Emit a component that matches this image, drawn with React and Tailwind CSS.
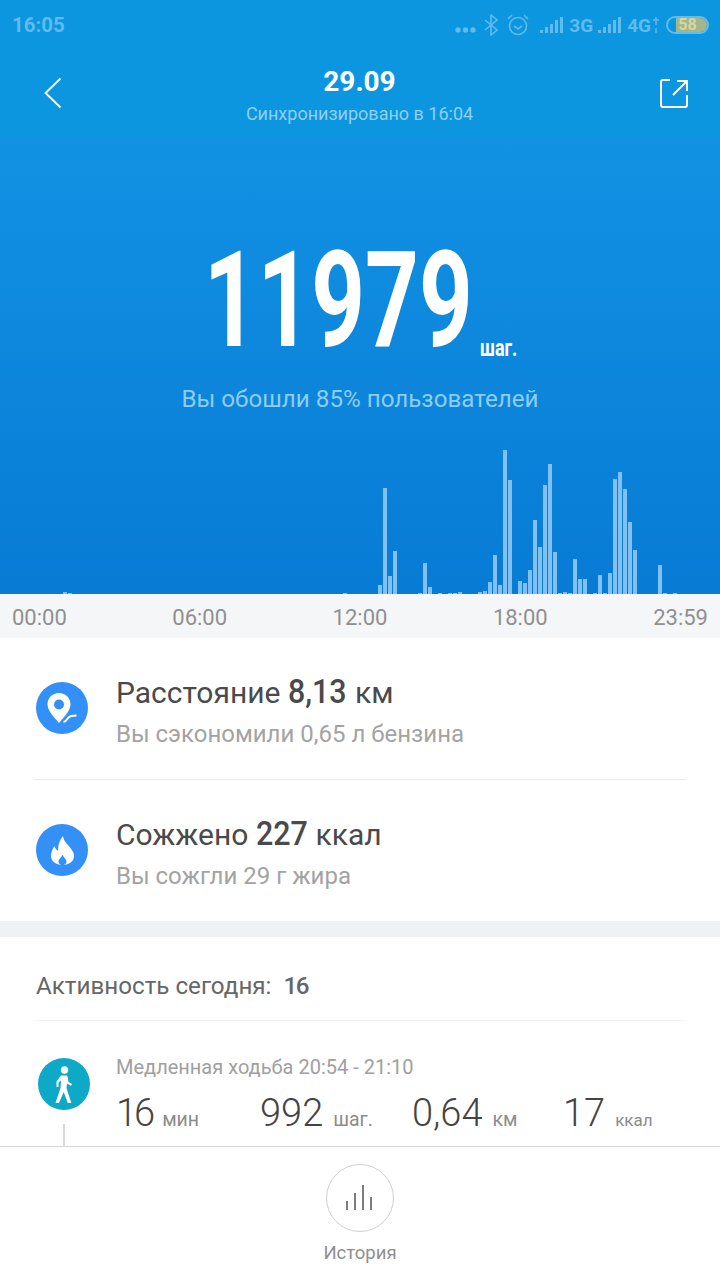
const BARS = { 12: 2, 13: 1, 68: 1, 75: 9, 76: 106, 77: 18, 78: 43, 83: 1, 84: 31, 85: 7, 87: 1, 89: 1, 90: 1, 91: 2, 95: 2, 96: 3, 97: 12, 98: 39, 99: 9, 100: 144, 101: 114, 103: 13, 104: 11, 105: 24, 106: 74, 107: 47, 108: 109, 109: 130, 110: 42, 111: 1, 112: 2, 113: 1, 114: 35, 115: 15, 116: 15, 118: 1, 119: 19, 120: 1, 121: 21, 122: 115, 123: 122, 124: 105, 125: 72, 126: 44, 131: 29, 132: 1, 134: 1 };
const SLOTS = Array.from({ length: 143 }, (_, i) => BARS[i] || 0);

function Signal() {
  return (
    <svg width="26" height="18" viewBox="0 0 26 18" fill="currentColor">
      <rect x="1" y="14" width="3" height="3" />
      <rect x="6" y="11" width="3" height="6" />
      <rect x="11" y="8" width="3" height="9" />
      <rect x="16" y="4" width="3" height="13" />
      <rect x="21" y="1" width="3" height="16" />
    </svg>
  );
}

function StatusBar() {
  return (
    <div className="flex h-[50px] items-center justify-between pl-[12px] pr-[11px] text-[#5fbcec]">
      <span className="text-[20.5px] font-bold leading-none">16:05</span>
      <div className="flex items-center">
        <svg className="mt-[9px]" width="21" height="8" viewBox="0 0 21 8" fill="currentColor">
          <circle cx="3" cy="4" r="2.700" />
          <circle cx="10.500" cy="4" r="2.700" />
          <circle cx="18" cy="4" r="2.700" />
        </svg>
        <svg className="ml-[8px]" width="14" height="22" viewBox="0 0 14 22" fill="none" stroke="currentColor" strokeWidth="1.6">
          <path d="M1 6l12 10-6 5V1l6 5L1 16" />
        </svg>
        <svg className="ml-[8px]" width="24" height="24" viewBox="0 0 24 24" fill="none" stroke="currentColor" strokeWidth="1.6">
          <circle cx="12" cy="13" r="8.500" />
          <path d="M8 13l4 3 4-3M2 6l4-4M22 6l-4-4" />
        </svg>
        <span className="ml-[9px]"><Signal /></span>
        <span className="ml-[4px] text-[19px] font-bold leading-none">3G</span>
        <span className="ml-[4px]"><Signal /></span>
        <span className="ml-[4px] text-[19px] font-bold leading-none">4G</span>
        <svg width="11" height="20" viewBox="0 0 11 20" fill="none" stroke="currentColor" strokeWidth="1.4">
          <path d="M5 2v8M2 5h6M5 13v5" />
        </svg>
        <div className="relative ml-[4px] flex h-[18px] w-[43px] items-center justify-center overflow-hidden rounded-full border-2 border-[#5fbcec]">
          <div className="absolute inset-y-0 left-[8px] right-0 bg-[#a3b58a]" />
          <span className="relative text-[16px] font-bold leading-none text-[#d7d6a0]">58</span>
        </div>
      </div>
    </div>
  );
}

function Header() {
  return (
    <div className="h-[138px] bg-[#0c96df]">
      <StatusBar />
      <div className="flex items-start justify-between pl-[43px] pr-[32px]">
        <svg className="mt-[27px]" width="20" height="32" viewBox="0 0 20 32" fill="none" stroke="white" strokeWidth="1.8">
          <path d="M17.500 1.500L2.500 16l15 14.500" />
        </svg>
        <div className="mr-[4px] flex flex-col items-center">
          <span className="mt-[14px] text-[28px] font-bold leading-[36px] text-white">29.09</span>
          <span className="mt-[1px] text-[18px] leading-[26px] text-[#8fd0f3]">Синхронизировано в 16:04</span>
        </div>
        <svg className="mt-[28px]" width="28" height="30" viewBox="0 0 28 30" fill="none" stroke="white" strokeWidth="2">
          <path d="M10 2H3a2 2 0 0 0-2 2v23a2 2 0 0 0 2 2h22a2 2 0 0 0 2-2v-10" />
          <path d="M13 17L27 3M17 3h10v10" />
        </svg>
      </div>
    </div>
  );
}

function Hero() {
  return (
    <div className="flex h-[456px] flex-col bg-gradient-to-b from-[#1292e3] to-[#087bd5]">
      <div className="mt-[95px] flex h-[136px] items-end pl-[206px] text-white">
        <div className="flex h-[136px] w-[264px] justify-center text-[134px] font-bold leading-[136px]">
          <span className="inline-block origin-center scale-x-[0.7]">11979</span>
        </div>
        <span className="mb-[9px] ml-[10px] w-[46px] origin-left scale-x-[0.75] text-[24px] font-bold leading-none">шаг.</span>
      </div>
      <div className="mt-[15px] text-center text-[24.200px] leading-[30px] text-[#8dcdf2]">Вы обошли 85% пользователей</div>
      <div className="mt-auto flex h-[146px] items-end gap-[1px] pl-[3px]">
        {SLOTS.map((h, i) => (
          <div key={i} className="w-[4px] shrink-0 bg-[#80c1f1]" style={{ height: h }} />
        ))}
      </div>
    </div>
  );
}

function TimeAxis() {
  return (
    <div className="flex h-[44px] items-center justify-between bg-[#f5f6f8] px-[12px] pt-[3px] text-[22px] text-[#909090]">
      <span>00:00</span>
      <span>06:00</span>
      <span>12:00</span>
      <span>18:00</span>
      <span>23:59</span>
    </div>
  );
}

function PinIcon() {
  return (
    <svg width="32" height="32" viewBox="0 0 32 32" fill="white">
      <path fillRule="evenodd" d="M13 1C6.400 1 1.500 6 1.500 12.300c0 6.200 6.500 13 11.500 18.700 5-5.700 11.500-12.500 11.500-18.700C24.500 6 19.600 1 13 1zm0 6.500a5 5 0 1 1 0 10 5 5 0 0 1 0-10z" />
      <path d="M17.500 30c3-.5 3.500-3 5-4.500s4-2 8-2" fill="none" stroke="white" strokeWidth="2" />
    </svg>
  );
}

function FlameIcon() {
  return (
    <svg width="25" height="30" viewBox="0 0 25 30" fill="white">
      <path fillRule="evenodd" d="M13 1c.5 5 4 7.500 7 11.500 2.500 3 4 5.500 4 8.500 0 5.500-5 9-11.500 9S1 26.500 1 21c0-4 1.500-7 3.500-10 .5 2 1.500 3.500 3.500 4.800C8 10 9.500 5 13 1zm-.5 18.500c-1 3-4 4.500-4 7.300 0 1.800 1.800 3.200 4 3.200s4-1.400 4-3.200c0-2.800-3-4.300-4-7.300z" />
    </svg>
  );
}

function WalkIcon() {
  return (
    <svg width="18" height="37" viewBox="0 0 18 37" fill="white">
      <circle cx="9.500" cy="4" r="3.700" />
      <path d="M6 9.500h5c1 0 1.500.5 1.700 1.500l.8 5 3.500 2-1 1.800-4-2.300-.5 4.500 5 15.500h-3.500l-4.300-11.500L4 37H.5l5-15 .5-7.500-2.500 2V21h-2v-5.500z" />
    </svg>
  );
}

function StatRow({ icon, label, value, unit, note }) {
  return (
    <div className="flex h-[141px] items-center pt-[5px]">
      <div className="mb-[7px] flex h-[52px] w-[52px] shrink-0 items-center justify-center rounded-full bg-[#3390f6]">{icon}</div>
      <div className="ml-[28px]">
        <div className="whitespace-nowrap text-[30px] leading-[36px] text-[#4a4a4a]">
          {label} <span className="mr-[-4px] inline-block origin-left scale-x-[0.92] text-[33px] font-medium">{value}</span> <span className="text-[30px]">{unit}</span>
        </div>
        <div className="mt-[8px] text-[24px] leading-[30px] text-[#a3a3a3]">{note}</div>
      </div>
    </div>
  );
}

function Metric({ value, unit, className, valueClass = "", unitClass = "text-[19.500px]" }) {
  return (
    <div className={`flex items-baseline ${className}`}>
      <span className={`text-[38px] font-light leading-[44px] text-[#444] ${valueClass}`}>{value}</span>
      <span className={`ml-[10px] leading-none text-[#8c8c8c] ${unitClass}`}>{unit}</span>
    </div>
  );
}

function Activity() {
  return (
    <div className="min-h-0 flex-1 overflow-hidden bg-white px-[36px]">
      <div className="flex h-[84px] items-center border-b border-[#f0f0f0] pt-[15px] text-[24.200px] text-[#666]">
        Активность сегодня:<span className="ml-[12px] font-medium tracking-[-1.500px]">16</span>
      </div>
      <div className="flex pt-[37px]">
        <div className="flex w-[56px] flex-col items-center">
          <div className="flex h-[52px] w-[52px] items-center justify-center rounded-full bg-[#0fa9c8]">
            <WalkIcon />
          </div>
          <div className="mt-[14px] h-[40px] w-[2px] bg-[#d9d9d9]" />
        </div>
        <div className="ml-[24px] flex-1">
          <div className="-mt-[2px] text-[20px] leading-[22px] text-[#a0a0a0]">Медленная ходьба 20:54 - 21:10</div>
          <div className="mt-[13px] flex">
            <Metric value="16" unit="мин" className="w-[144px]" valueClass="tracking-[-3px]" />
            <Metric value="992" unit="шаг." className="w-[152px]" />
            <Metric value="0,64" unit="км" className="w-[151px]" />
            <Metric value="17" unit="ккал" unitClass="text-[17px]" />
          </div>
        </div>
      </div>
    </div>
  );
}

export default function App() {
  return (
    <div className="flex h-[1280px] w-[720px] flex-col overflow-hidden bg-white font-['Roboto',sans-serif]">
      <Header />
      <Hero />
      <TimeAxis />
      <div className="bg-white px-[36px]">
        <StatRow icon={<PinIcon />} label="Расстояние" value="8,13" unit="км" note="Вы сэкономили 0,65 л бензина" />
        <div className="-mx-[2px] border-t border-[#ececec] px-[2px]">
          <StatRow icon={<FlameIcon />} label="Сожжено" value="227" unit="ккал" note="Вы сожгли 29 г жира" />
        </div>
      </div>
      <div className="h-[16px] bg-[#f0f1f3]" />
      <Activity />
      <div className="flex h-[134px] flex-col items-center border-t border-[#d5d5d5] bg-white pt-[17px]">
        <div className="flex h-[68px] w-[68px] items-center justify-center rounded-full border border-[#d0d0d0]">
          <svg width="28" height="26" viewBox="0 0 28 26" fill="#7d7d7d">
            <rect x="0" y="16" width="2" height="9" />
            <rect x="8" y="8" width="2" height="17" />
            <rect x="16" y="0" width="2" height="25" />
            <rect x="24" y="12" width="2" height="13" />
          </svg>
        </div>
        <span className="mt-[10px] text-[18.500px] leading-[22px] text-[#8f8f8f]">История</span>
      </div>
    </div>
  );
}
